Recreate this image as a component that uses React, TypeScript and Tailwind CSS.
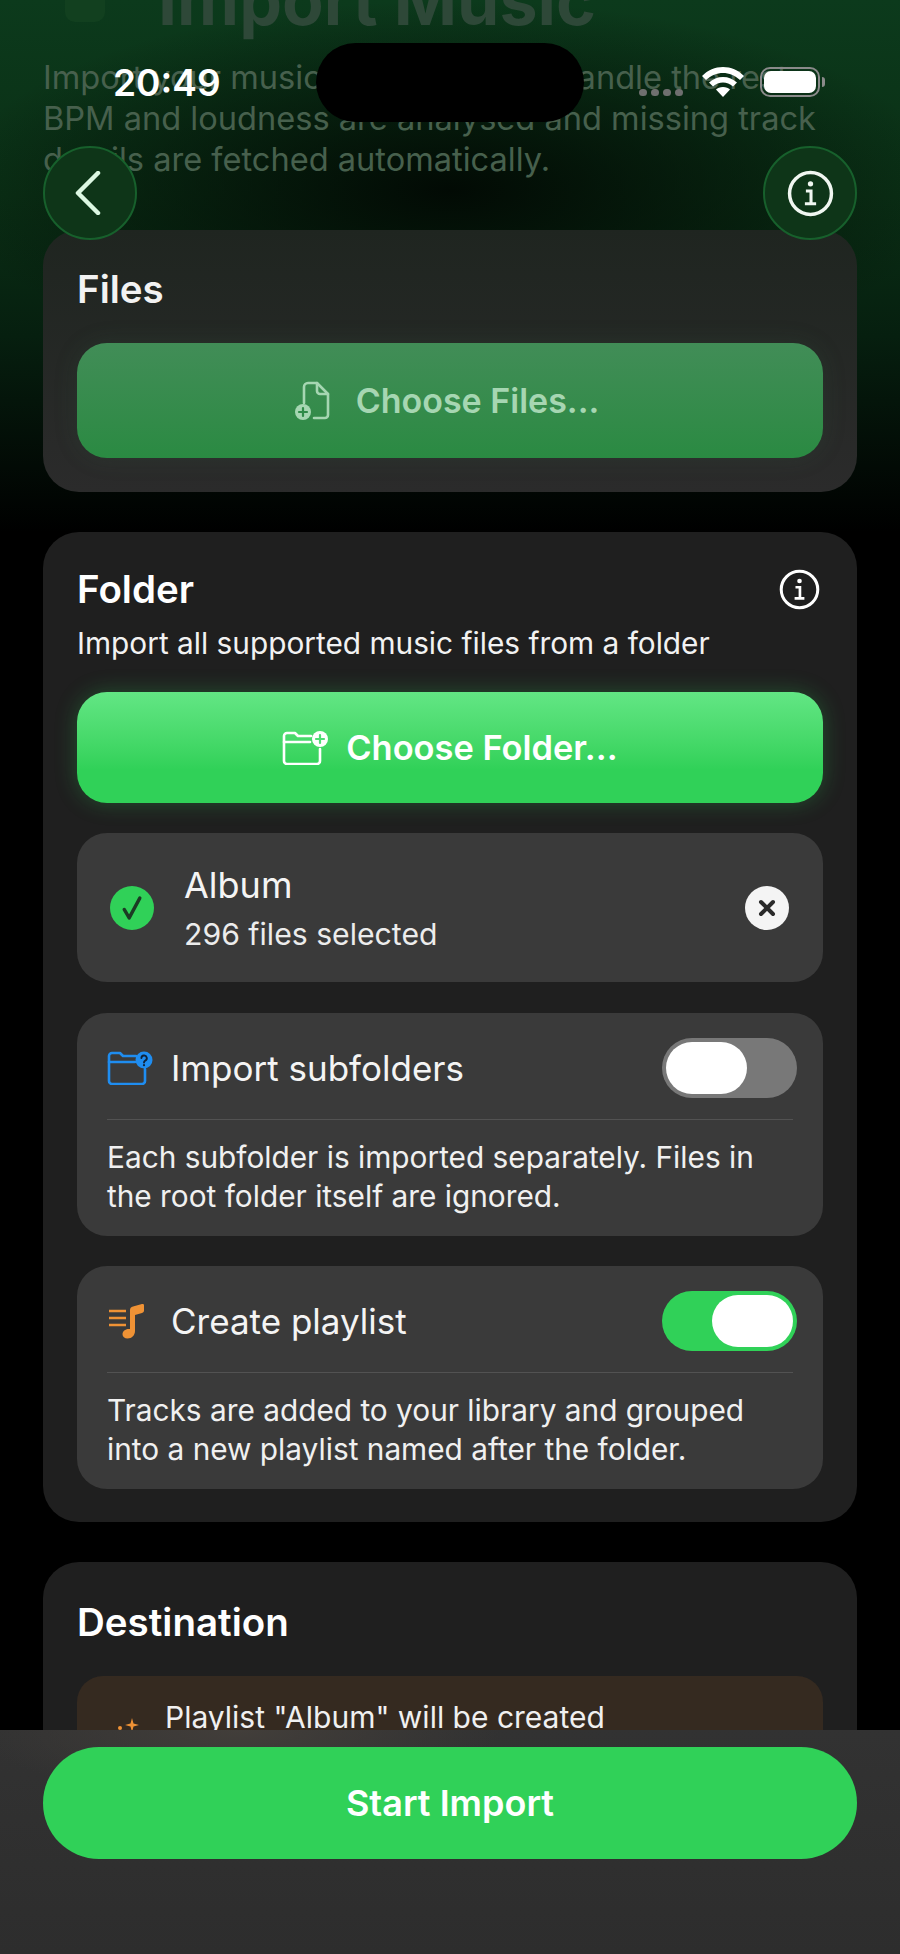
const font = { fontFamily: 'Inter, "Noto Sans", sans-serif' }

const InfoIcon = ({ className }: { className: string }) => (
  <svg viewBox="0 0 46 46" fill="none" stroke="currentColor" className={className}>
    <circle cx="23" cy="23" r="20.5" strokeWidth="3.4" />
    <circle cx="23" cy="13.5" r="2.6" fill="currentColor" stroke="none" />
    <path d="M18.5 20.5h5v12M17.500 33h11" strokeWidth="3" />
  </svg>
)

const FileAddIcon = () => (
  <svg viewBox="0 0 36 40" fill="none" stroke="currentColor" strokeWidth="2.6" strokeLinecap="round" strokeLinejoin="round" className="h-[40px] w-[36px]">
    <path d="M10 22V6a4 4 0 0 1 4-4h9l11 11v21a3 3 0 0 1-3 3H20" />
    <path d="M23 2v8a3 3 0 0 0 3 3h8" />
    <circle cx="9" cy="31" r="8" fill="currentColor" stroke="none" />
    <path d="M9 27v8M5 31h8" stroke="#2f8a48" strokeWidth="2.2" />
  </svg>
)

const FolderAddIcon = () => (
  <svg viewBox="0 0 46 34" fill="none" stroke="currentColor" strokeWidth="2.6" strokeLinecap="round" strokeLinejoin="round" className="h-[34px] w-[46px]">
    <path d="M29 5H16l-3-3H5a3 3 0 0 0-3 3v25a3 3 0 0 0 3 3h30a3 3 0 0 0 3-3V18" />
    <path d="M2 11h26" />
    <circle cx="38" cy="8" r="8" fill="currentColor" stroke="none" />
    <path d="M38 4v8M34 8h8" stroke="#4fdd75" strokeWidth="2.2" />
  </svg>
)

const FolderHelpIcon = () => (
  <svg viewBox="0 0 46 34" fill="none" stroke="currentColor" strokeWidth="2.6" strokeLinecap="round" strokeLinejoin="round" className="h-[34px] w-[46px] text-[#1f8df0]">
    <path d="M29 5H16l-3-3H5a3 3 0 0 0-3 3v25a3 3 0 0 0 3 3h30a3 3 0 0 0 3-3V18" />
    <path d="M2 11h26" />
    <circle cx="37" cy="9" r="8.5" fill="currentColor" stroke="none" />
    <path d="M34.4 7a2.7 2.7 0 1 1 3.8 2.6c-.9.5-1.2 1-1.2 2" stroke="#10243a" strokeWidth="1.9" />
    <circle cx="37" cy="14.2" r="1.1" fill="#10243a" stroke="none" />
  </svg>
)

const PlaylistIcon = () => (
  <svg viewBox="0 0 38 36" fill="none" className="ml-[1px] h-[36px] w-[38px] text-[#ef9235]">
    <path d="M1 8h17M1 15h17M1 22h17" stroke="currentColor" strokeWidth="2.6" />
    <path d="M22 7c0-2 1-3 3-3.500l9-2.500c1.500-.4 2 .2 2 1.500v5c0 1.300-.5 2-2 2.400l-7 2V28c0 4-3 7.500-7.500 7.500-3 0-5-1.700-5-4.200 0-3 2.700-5.300 6-5.300.6 0 1 0 1.500.1z" fill="currentColor" />
  </svg>
)

const Toggle = ({ on }: { on: boolean }) => (
  <div className={`flex h-[60px] w-[135px] items-center rounded-full p-[4px] ${on ? 'justify-end bg-[#30d158]' : 'justify-start bg-[#787878]'}`}>
    <div className="h-[52px] w-[81px] rounded-full bg-white" />
  </div>
)

const OptionCard = ({ icon, title, on, lines }: { icon: React.ReactNode; title: string; on: boolean; lines: string[] }) => (
  <div className="h-[223px] rounded-[30px] bg-[#3a3a3a] px-[30px] pt-[25px]">
    <div className="-mr-[4px] flex h-[60px] items-center">
      <div className="flex w-[64px] items-center">{icon}</div>
      <span className="text-[35px] leading-[44px] text-[#f4f4f4]">{title}</span>
      <div className="ml-auto">
        <Toggle on={on} />
      </div>
    </div>
    <div className="mt-[21px] h-px bg-[#525252]" />
    <div className="pt-[18px] text-[29.800px] leading-[39px] text-[#f0f0f0]">
      {lines.map((l) => (
        <p key={l}>{l}</p>
      ))}
    </div>
  </div>
)

export default function App() {
  return (
    <div style={font} className="relative h-[1954px] w-[900px] overflow-hidden bg-black text-white">
      {/* green glow behind the top of the page */}
      <div className="absolute inset-x-0 top-0 h-[560px] bg-[radial-gradient(ellipse_500px_190px_at_50%_190px,#020a04_0%,transparent_100%),linear-gradient(180deg,#0c3a1c_0%,#0a2f15_35%,#061f0f_60%,#000000_95%)]" />

      <div className="relative flex flex-col px-[43px]">
        {/* header scrolled up under the nav bar */}
        <div className="-mt-[45px] flex h-[90px] items-center gap-[53px] pl-[22px]">
          <div className="h-[44px] w-[40px] rounded-[10px] bg-[#12401f]" />
          <h1 className="text-[68px] font-bold leading-[90px] text-[#2e4838]">Import Music</h1>
        </div>
        <p className="mt-[12px] text-[32.600px] leading-[41px] text-[#47604d]">
          Import your music library and we handle the rest.
          <br />
          BPM and loudness are analysed and missing track
          <br />
          details are fetched automatically.
        </p>

        <div className="mt-[50px] flex flex-col gap-[40px]">
          <section className="h-[262px] rounded-[36px] bg-gradient-to-b from-[#1f2520] to-[#2b2b2b] px-[34px] pt-[37px]">
            <h2 className="text-[38.500px] font-semibold leading-[44px] text-[#f2f2f2]">Files</h2>
            <div className="mt-[32px] flex h-[115px] items-center justify-center gap-[26px] rounded-[30px] bg-gradient-to-b from-[#418d57] to-[#2a8a42] pr-[7px] text-[#a6d6b2] shadow-[0_0_24px_rgba(60,120,80,0.15)]">
              <FileAddIcon />
              <span className="text-[34px] font-semibold">Choose Files...</span>
            </div>
          </section>

          <section className="rounded-[36px] bg-[#1f1f1f] px-[34px] pb-[33px] pt-[35px]">
            <div className="flex items-center justify-between">
              <h2 className="text-[38.500px] font-semibold leading-[44px]">Folder</h2>
              <InfoIcon className="mr-[3px] h-[41px] w-[41px]" />
            </div>
            <p className="mt-[13px] text-[29.800px] leading-[38px] text-[#f2f2f2]">Import all supported music files from a folder</p>
            <div className="mt-[30px] flex h-[111px] items-center justify-center gap-[18px] rounded-[30px] bg-gradient-to-b from-[#62e684] via-[#30d158] via-70% to-[#30d158] shadow-[0_0_22px_rgba(48,209,88,0.28)]">
              <FolderAddIcon />
              <span className="text-[34.400px] font-semibold">Choose Folder...</span>
            </div>

            <div className="mt-[30px] flex h-[149px] items-center rounded-[30px] bg-[#3a3a3a] pl-[33px] pr-[34px]">
              <div className="flex h-[44px] w-[44px] items-center justify-center rounded-full bg-[#30d158]">
                <svg viewBox="0 0 24 24" fill="none" stroke="#1c3a24" strokeWidth="2.400" strokeLinecap="round" strokeLinejoin="round" className="h-[34px] w-[34px]">
                  <path d="M6.500 13l3.500 6 7.500-14" />
                </svg>
              </div>
              <div className="ml-[30px] flex flex-col pt-[3px]">
                <span className="text-[36px] leading-[46px] text-[#f4f4f4]">Album</span>
                <span className="mt-[3px] text-[30.200px] leading-[46px] text-[#ececec]">296 files selected</span>
              </div>
              <div className="ml-auto flex h-[44px] w-[44px] items-center justify-center rounded-full bg-[#f4f4f4]">
                <svg viewBox="0 0 24 24" fill="none" stroke="#2a2a2a" strokeWidth="4" strokeLinecap="round" className="h-[24px] w-[24px]">
                  <path d="M6 6l12 12M18 6L6 18" />
                </svg>
              </div>
            </div>

            <div className="mt-[31px] flex flex-col gap-[30px]">
              <OptionCard
                icon={<FolderHelpIcon />}
                title="Import subfolders"
                on={false}
                lines={['Each subfolder is imported separately. Files in', 'the root folder itself are ignored.']}
              />
              <OptionCard
                icon={<PlaylistIcon />}
                title="Create playlist"
                on
                lines={['Tracks are added to your library and grouped', 'into a new playlist named after the folder.']}
              />
            </div>
          </section>

          <section className="rounded-[36px] bg-[#1f1f1f] px-[34px] pt-[38px]">
            <h2 className="text-[38.500px] font-semibold leading-[44px]">Destination</h2>
            <div className="mt-[32px] flex h-[140px] items-start gap-[26px] rounded-[26px] bg-[#352a20] pl-[40px] pt-[22px]">
              <svg viewBox="0 0 22 22" className="mt-[20px] h-[22px] w-[22px] text-[#ef9235]" fill="currentColor">
                <path d="M15 0l1.500 5.500L22 7l-5.500 1.500L15 14l-1.500-5.500L8 7l5.500-1.500z" />
                <circle cx="3" cy="10" r="2" />
              </svg>
              <span className="text-[30px] leading-[38px] text-[#f0f0f0]">Playlist "Album" will be created</span>
            </div>
          </section>
        </div>
      </div>

      {/* status bar */}
      <div className="absolute left-[113px] top-[61px] text-[37px] font-semibold leading-[44px]">20:49</div>
      <div className="absolute left-[316px] top-[43px] h-[79px] w-[268px] rounded-[40px] bg-black" />
      <div className="absolute left-[639px] top-[67px] flex h-[30px] items-center gap-[9px]">
        <div className="mt-[21px] flex gap-[4px]">
          {[0, 1, 2, 3].map((i) => (
            <div key={i} className="h-[7px] w-[8px] rounded-full bg-[#6f6f6f]" />
          ))}
        </div>
        <svg viewBox="0 0 42 30" className="ml-[10px] h-[30px] w-[42px]" fill="white">
          <path d="M21 0C13 0 6 3 0 9l4 4c5-4.500 11-7 17-7s12 2.500 17 7l4-4C36 3 29 0 21 0z" />
          <path d="M21 10c-5.500 0-10 2-14 5.500l4 4c3-2.500 6.500-4 10-4s7 1.500 10 4l4-4C31 12 26.500 10 21 10z" />
          <path d="M21 20c-3 0-5.500 1-7 2.500L21 30l7-7.500C26.500 21 24 20 21 20z" />
        </svg>
        <div className="ml-[7px] flex h-[30px] w-[60px] items-center rounded-[10px] border-2 border-[#8a8a8a] p-[2px]">
          <div className="h-full w-full rounded-[7px] bg-white" />
        </div>
        <div className="-ml-[7px] h-[10px] w-[3px] rounded-r-full bg-[#8a8a8a]" />
      </div>

      {/* nav buttons */}
      <div className="absolute left-[43px] top-[146px] flex h-[94px] w-[94px] items-center justify-center rounded-full border-2 border-[#17602c] bg-[#0e3518]">
        <svg viewBox="0 0 26 44" fill="none" stroke="#dcf7e2" strokeWidth="4.500" strokeLinecap="round" strokeLinejoin="round" className="mr-[5px] h-[44px] w-[26px]">
          <path d="M23 2L3 22l20 20" />
        </svg>
      </div>
      <div className="absolute left-[763px] top-[146px] flex h-[94px] w-[94px] items-center justify-center rounded-full border-2 border-[#17602c] bg-[#0e3518]">
        <InfoIcon className="h-[47px] w-[47px] text-[#f0f7f1]" />
      </div>

      {/* bottom action bar */}
      <div className="absolute inset-x-0 bottom-0 h-[224px] bg-[radial-gradient(ellipse_260px_70px_at_240px_0px,#423e3a_0%,transparent_100%),linear-gradient(180deg,#323232_0%,#2d2d2d_100%)] px-[43px] pt-[17px]">
        <div className="flex h-[112px] items-center justify-center rounded-full bg-[#30d158]">
          <span className="text-[36px] font-semibold">Start Import</span>
        </div>
      </div>
    </div>
  )
}
